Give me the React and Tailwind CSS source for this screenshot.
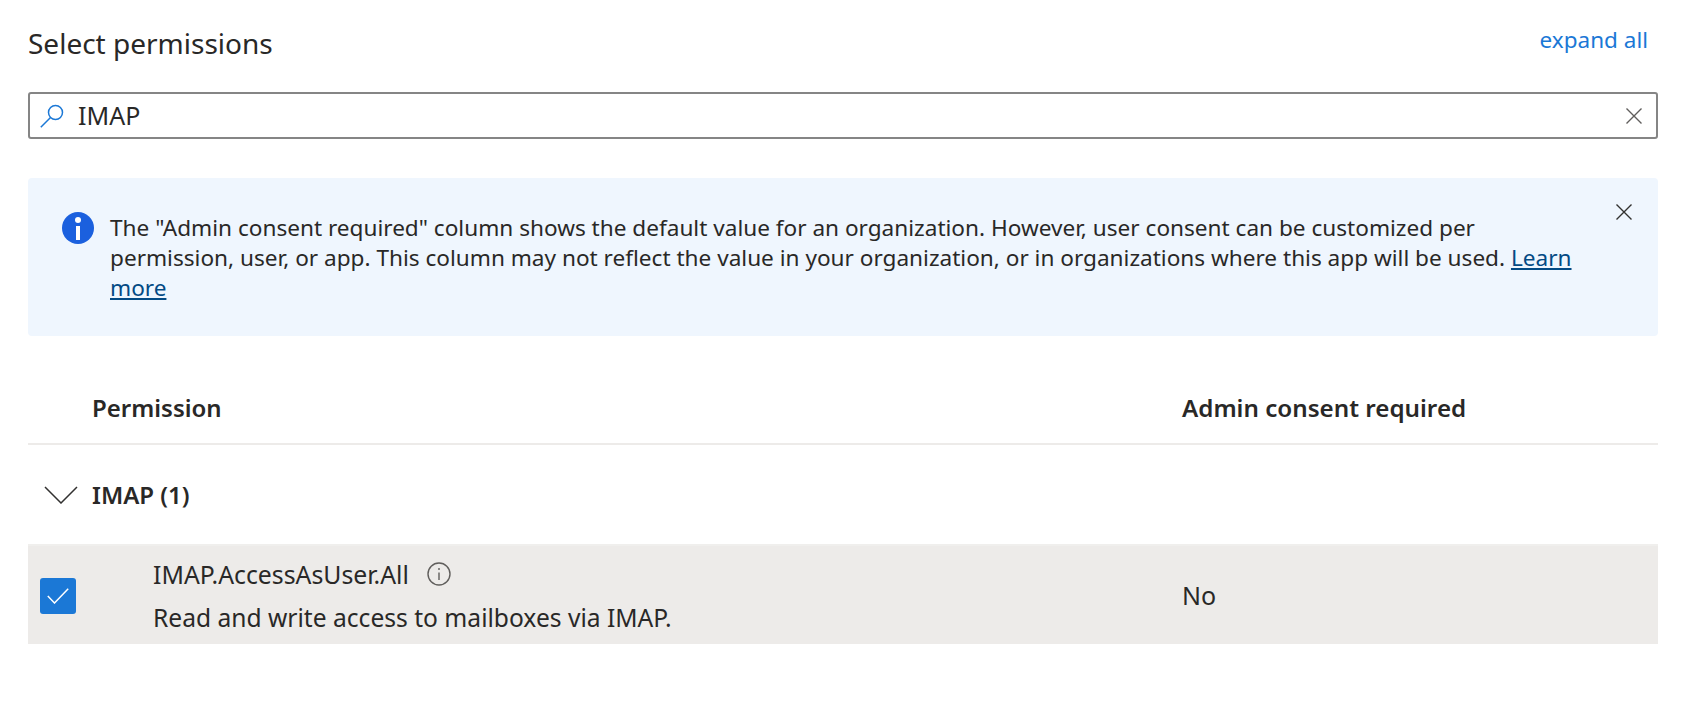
import React from "react";

function App() {
  return (
    <div className="w-[1684px] h-[706px] bg-white text-[#292827] pl-[28px] pr-[26px] overflow-hidden font-['Noto_Sans',sans-serif]">
      {/* title */}
      <div className="flex justify-between h-[92px] pt-[22px]">
        <h1 className="text-[28px] leading-[42px]">Select permissions</h1>
        <a className="text-[22.5px] leading-[36px] text-[#1b78d6] mr-[10px]">expand all</a>
      </div>

      {/* search */}
      <div className="flex items-center h-[47px] border-2 border-[#858585] rounded-[3px] pl-[10px] pr-[14px]">
        <svg width="24" height="24" viewBox="0 0 24 24" fill="none" stroke="#1b78d6" strokeWidth="1.5">
          <circle cx="15.5" cy="8.5" r="7" />
          <path d="M10.5 13.5 L0.8 23.2" />
        </svg>
        <span className="ml-[14px] text-[25px] flex-1">IMAP</span>
        <svg width="16" height="16" viewBox="0 0 16 16" stroke="#605e5c" strokeWidth="1.4">
          <path d="M0.5 0.5 L15.5 15.5 M15.5 0.5 L0.5 15.5" />
        </svg>
      </div>

      {/* info banner */}
      <div className="flex mt-[39px] h-[158px] bg-[#eff6fe] rounded-[4px] pl-[34px] pr-[26px] pt-[34px]">
        <svg width="32" height="32" viewBox="0 0 32 32" className="shrink-0">
          <circle cx="16" cy="16" r="16" fill="#1b60de" />
          <circle cx="16" cy="8" r="3" fill="#fff" />
          <rect x="14" y="14" width="4" height="14" fill="#fff" />
        </svg>
        <p className="ml-[16px] mt-[1px] w-[1472px] text-[22.6px] leading-[30px]">
          The "Admin consent required" column shows the default value for an organization. However, user consent can be customized per permission, user, or app. This column may not reflect the value in your organization, or in organizations where this app will be used.{" "}
          <a className="text-[#034a84] underline">Learn more</a>
        </p>
        <svg width="16" height="16" viewBox="0 0 16 16" stroke="#323130" strokeWidth="1.4" className="ml-auto shrink-0 -mt-[8px]">
          <path d="M0.5 0.5 L15.5 15.5 M15.5 0.5 L0.5 15.5" />
        </svg>
      </div>

      {/* table head */}
      <div className="flex items-center h-[109px] pt-[37px] border-b-2 border-[#edebe9] text-[24px] font-semibold">
        <span className="ml-[64px] w-[1090px]">Permission</span>
        <span className="text-[24.2px]">Admin consent required</span>
      </div>

      {/* group */}
      <div className="flex items-center h-[99px]">
        <svg width="34" height="18" viewBox="0 0 34 18" fill="none" stroke="#323130" strokeWidth="1.5" className="ml-[16px]">
          <path d="M1 1 L17 17 L33 1" />
        </svg>
        <span className="ml-[14px] text-[24px] font-semibold">IMAP (1)</span>
      </div>

      {/* row */}
      <div className="flex items-center h-[100px] bg-[#edebe9] border-t-2 border-[#f0efed]">
        <div className="flex items-center justify-center ml-[12px] mt-[1px] w-[36px] h-[36px] bg-[#1b78d6] rounded-[3px]">
          <svg width="22" height="16" viewBox="0 0 22 16" fill="none" stroke="#fff" strokeWidth="1.5">
            <path d="M0.8 8 L7.5 15 L21.2 0.8" />
          </svg>
        </div>
        <div className="ml-[77px] mt-[3px] w-[1029px]">
          <div className="flex items-center text-[24.8px] leading-[42px]">
            IMAP.AccessAsUser.All
            <svg width="24" height="24" viewBox="0 0 24 24" fill="none" stroke="#605e5c" strokeWidth="1.4" className="ml-[18px]">
              <circle cx="12" cy="12" r="11" />
              <path d="M12 10.5 V18 M12 6 V8" />
            </svg>
          </div>
          <div className="text-[24.6px] leading-[46px]">Read and write access to mailboxes via IMAP.</div>
        </div>
        <span className="text-[25px] mt-[1px]">No</span>
      </div>
    </div>
  );
}

export default App;
